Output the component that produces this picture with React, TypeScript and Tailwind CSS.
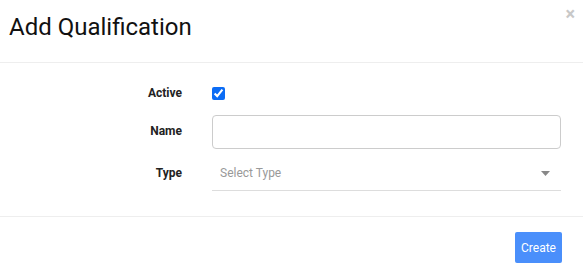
export default function App() {
  return (
    <div className="w-[583px] h-[270px] bg-white font-['Roboto',sans-serif] text-black overflow-hidden">
      {/* Header */}
      <div className="relative h-[63px] border-b border-[#eeeeee] px-[9px] pt-[11px]">
        <h1 className="text-[24px] leading-[32px] font-normal text-[#111]">Add Qualification</h1>
        <span className="absolute right-[8px] top-[4px] text-[18px] leading-[20px] font-bold text-[#c8c8c8]">×</span>
      </div>

      {/* Body */}
      <div className="h-[154px] border-b border-[#eeeeee] pt-[20px] flex flex-col">
        <div className="flex items-center h-[20px]">
          <label className="w-[182px] text-right text-[12px] font-bold text-[#222]">Active</label>
          <input type="checkbox" defaultChecked className="ml-[30px] w-[13px] h-[13px] accent-[#0b6cf5]" />
        </div>
        <div className="flex items-center mt-[12px]">
          <label className="w-[182px] text-right text-[12px] font-bold text-[#222] -mt-[2px]">Name</label>
          <input type="text" className="ml-[30px] w-[349px] h-[34px] rounded-[4px] border border-[#cccccc] outline-none" />
        </div>
        <div className="flex items-start mt-[8px]">
          <label className="w-[182px] text-right text-[12px] font-bold text-[#222] leading-[33px]">Type</label>
          <div className="ml-[30px] w-[349px] h-[34px] border-b border-[#dddddd] flex items-center justify-between pl-[8px] pr-[8px] pb-[1px]">
            <span className="text-[12px] text-[#999999]">Select Type</span>
            <svg width="9" height="5" viewBox="0 0 9 5" className="mr-[3px]">
              <path d="M0 0h9L4.5 5z" fill="#888888" />
            </svg>
          </div>
        </div>
      </div>

      {/* Footer */}
      <div className="flex justify-end pr-[21px] pt-[15px]">
        <button className="w-[47px] h-[31px] rounded-[2px] bg-[#4a8ffb] text-white text-[12px]">Create</button>
      </div>
    </div>
  );
}
